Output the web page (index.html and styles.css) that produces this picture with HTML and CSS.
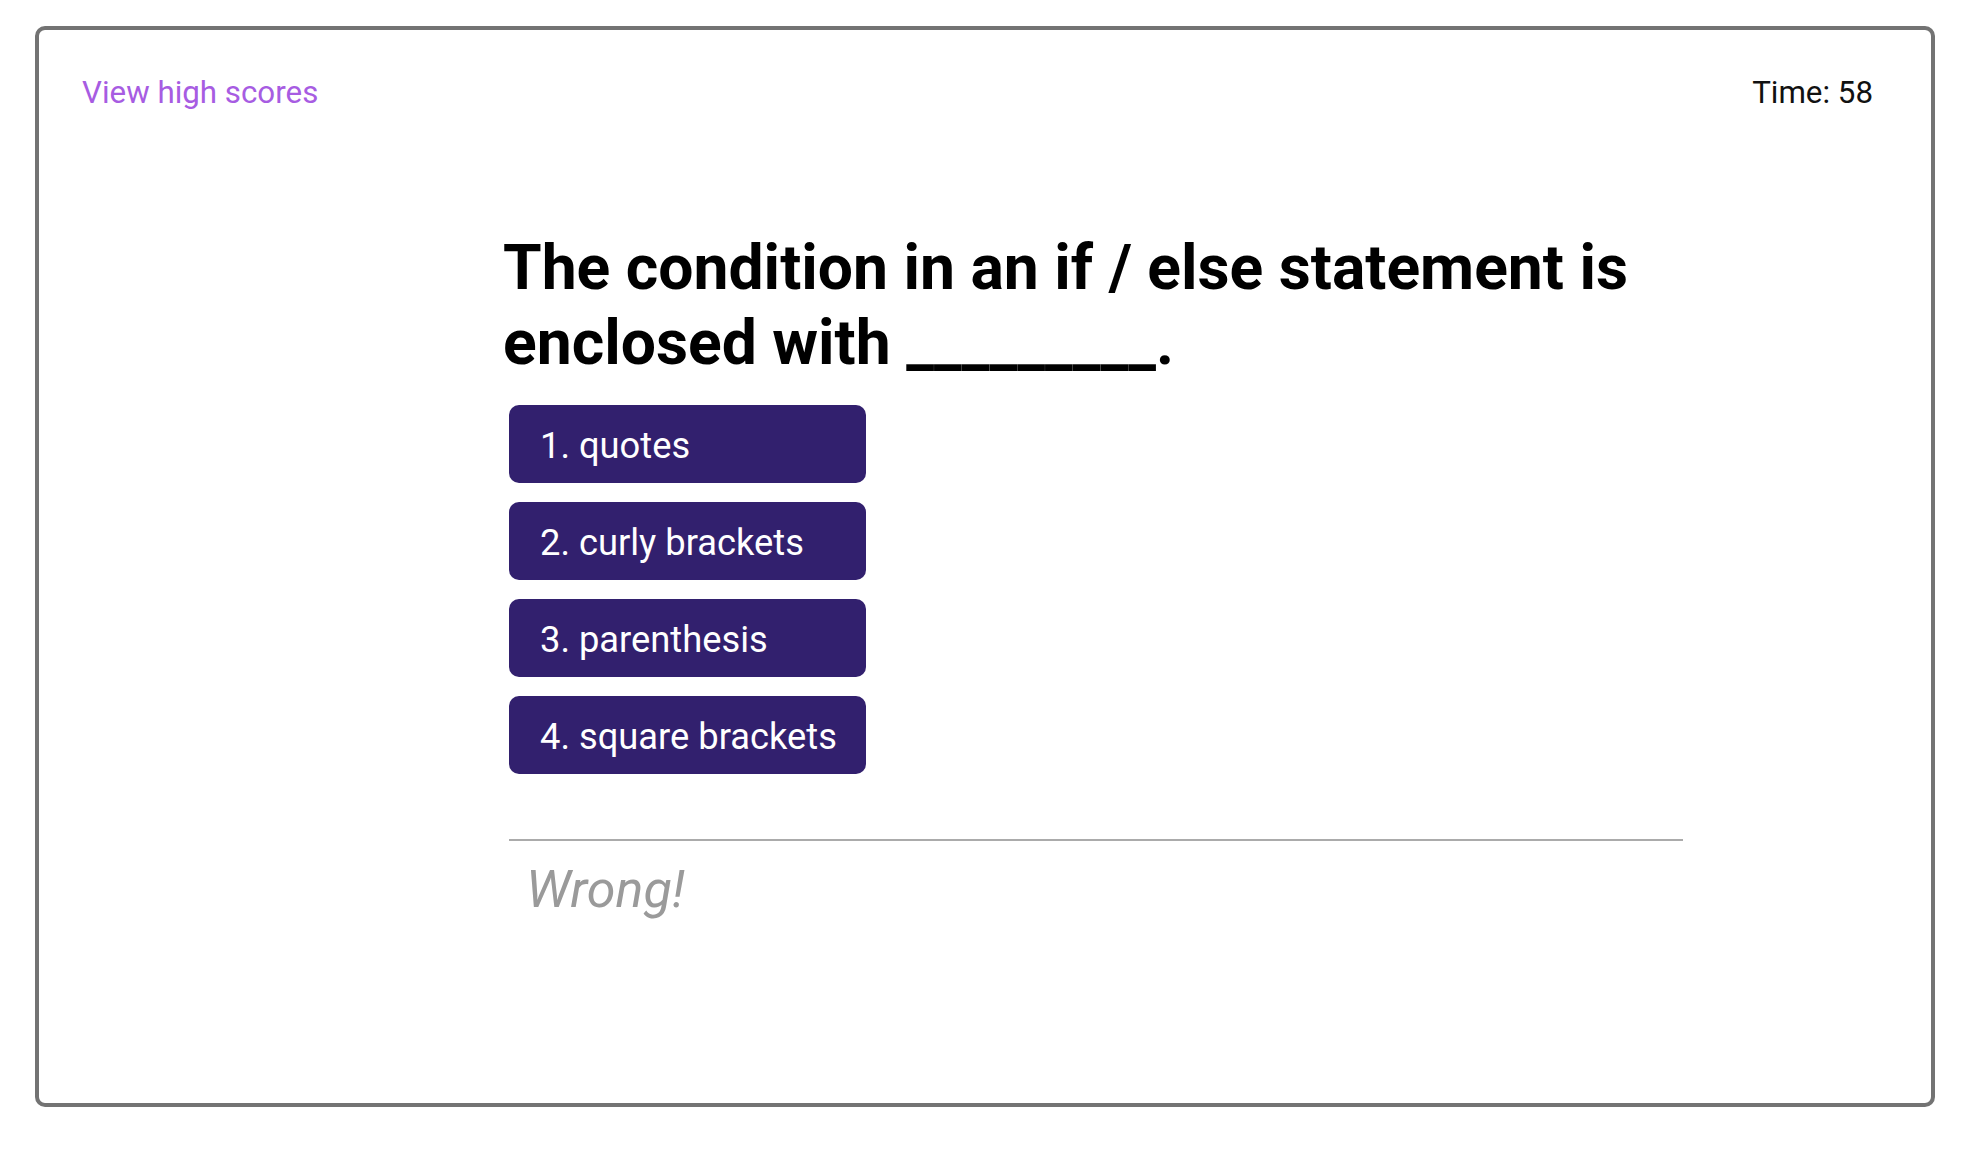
FILE: index.html
```html
<!DOCTYPE html>
<html lang="en">
<head>
<meta charset="utf-8">
<title>Code Quiz</title>
<link rel="stylesheet" href="styles.css">
</head>
<body>
<div class="frame">
  <header class="topbar">
    <a class="scores-link" href="#">View high scores</a>
    <div class="timer">Time: 58</div>
  </header>
  <main class="quiz">
    <h1 class="question">The condition in an if / else statement is enclosed with _________.</h1>
    <div class="choices">
      <button class="choice">1. quotes</button>
      <button class="choice">2. curly brackets</button>
      <button class="choice">3. parenthesis</button>
      <button class="choice">4. square brackets</button>
    </div>
    <div class="feedback">
      <p class="feedback-text">Wrong!</p>
    </div>
  </main>
</div>
</body>
</html>
```
FILE: styles.css
```css
html, body {
  margin: 0;
  padding: 0;
  background: #ffffff;
}

body {
  font-family: Roboto, "Liberation Sans", Arial, sans-serif;
  color: #111111;
}

.frame {
  box-sizing: border-box;
  margin: 26px 29px 0 35px;
  height: 1081px;
  border: 4px solid #737373;
  border-radius: 10px;
}

.topbar {
  display: flex;
  justify-content: space-between;
  align-items: flex-start;
  padding: 45px 58px 0 43px;
  font-size: 31.3px;
  line-height: 36px;
}

.scores-link {
  color: #a75ce2;
  text-decoration: none;
}

.timer {
  color: #111111;
}

.quiz {
  margin-left: 462px;
  width: 1190px;
}

.question {
  margin: 119px 0 0 2px;
  font-size: 62.4px;
  line-height: 75px;
  font-weight: 700;
  color: #000000;
  width: 1160px;
}

.choices {
  display: flex;
  flex-direction: column;
  align-items: flex-start;
  gap: 19px;
  margin: 25px 0 0 8px;
}

.choice {
  box-sizing: border-box;
  width: 357px;
  height: 78px;
  padding: 3px 0 0 31px;
  border: none;
  border-radius: 10px;
  background: #32206e;
  color: #ffffff;
  font-family: Roboto, "Liberation Sans", Arial, sans-serif;
  font-size: 36.3px;
  text-align: left;
  line-height: 42px;
}

.feedback {
  box-sizing: border-box;
  margin: 65px 0 0 8px;
  width: 1174px;
  border-top: 2px solid #ababab;
  padding: 19px 0 0 17px;
}

.feedback-text {
  margin: 0;
  font-size: 52px;
  font-style: italic;
  color: #9a9a9a;
  line-height: 60px;
}
```
